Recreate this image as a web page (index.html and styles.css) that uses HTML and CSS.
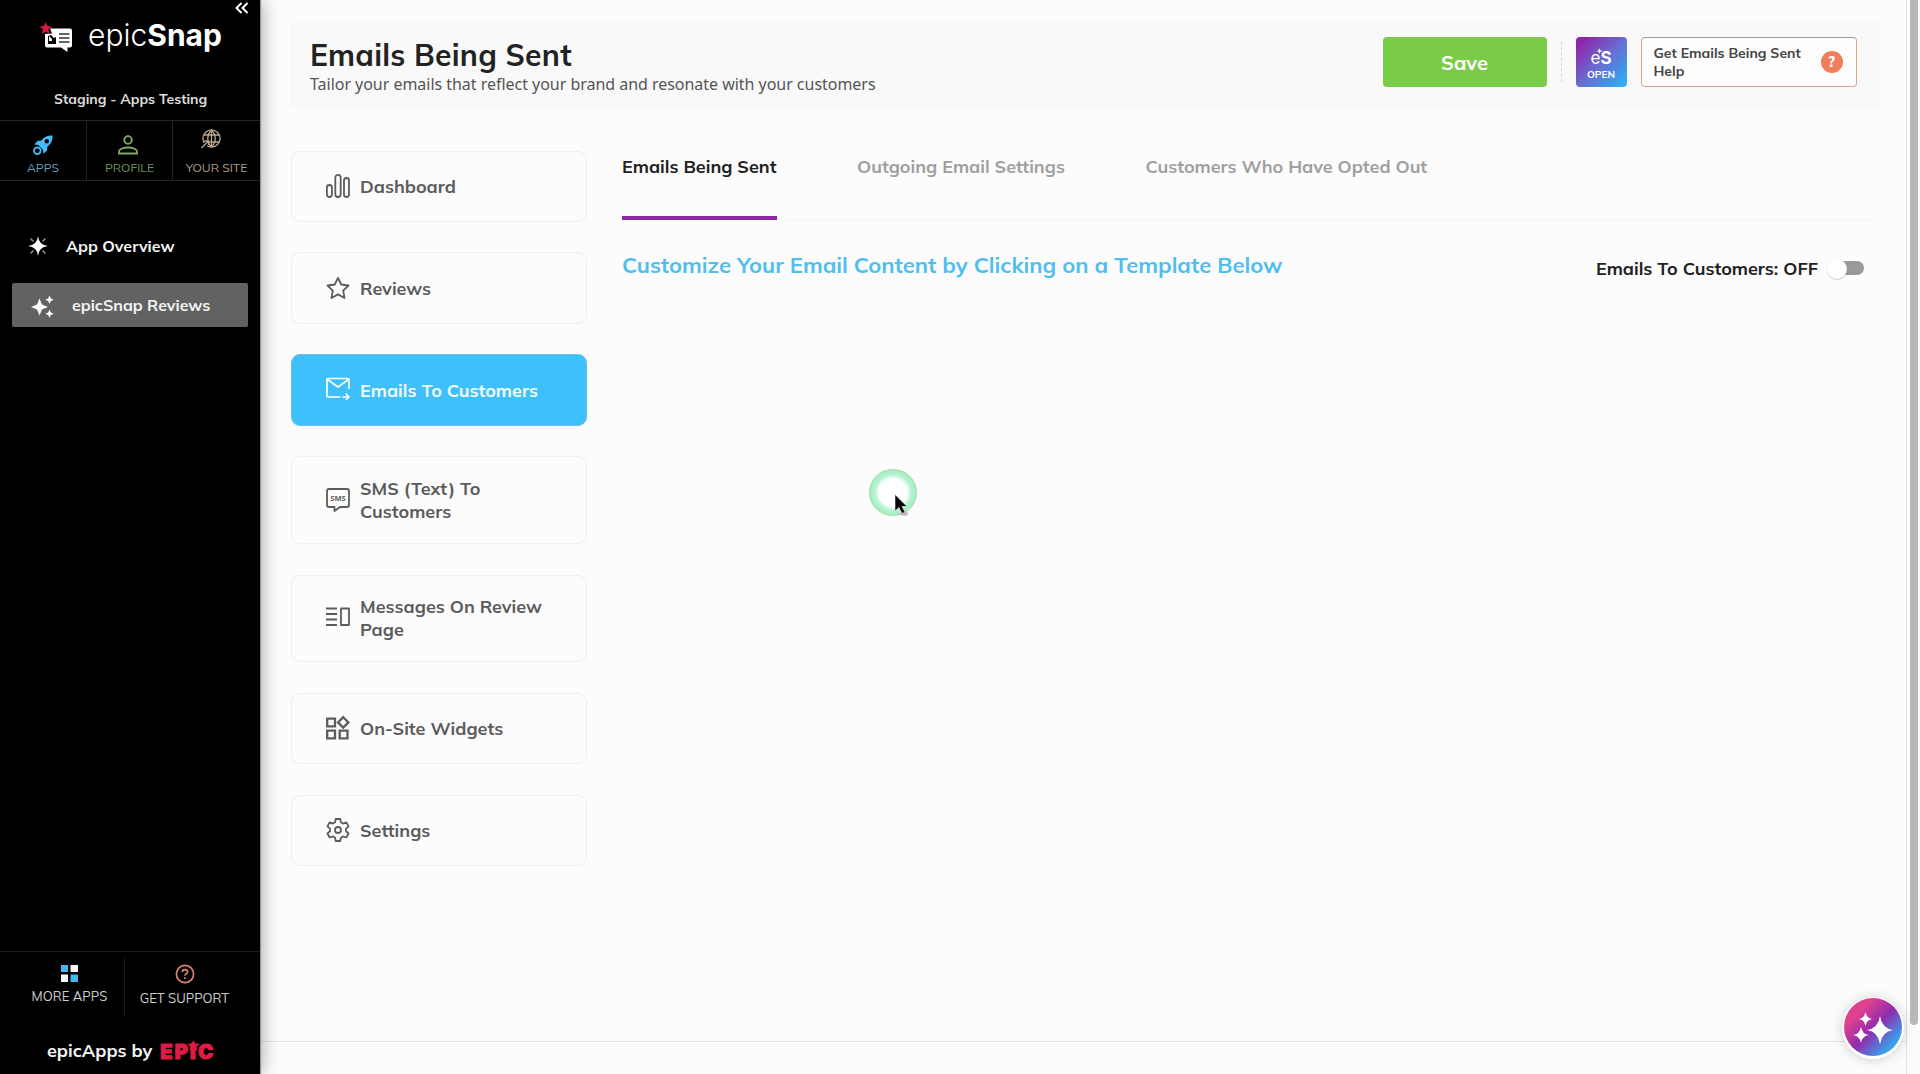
FILE: index.html
```html
<!DOCTYPE html>
<html lang="en">
<head>
    <meta charset="UTF-8">
    <meta name="viewport" content="width=device-width, initial-scale=1.0">
    <title>epicSnap - Emails Being Sent</title>
    <link rel="stylesheet" href="styles.css">
</head>
<body>
    <aside id="sidebar">
        <div id="collapse">
            <svg width="14" height="12" viewBox="0 0 14 12" fill="none" stroke="#fff" stroke-width="2"><path d="M6.5 1L1.5 6l5 5M12.5 1l-5 5 5 5"/></svg>
        </div>
        <div id="brand">
            <svg width="34" height="32" viewBox="0 0 34 32">
                <path fill="#fff" d="M7 6.500h23q2 0 2 2v15q0 2-2 2h-2.500V30L21 25.500H7q-2 0-2-2v-15q0-2 2-2z"/>
                <path fill="#000" d="M8 14l3-1 3 3 2-1v7H8z"/>
                <path fill="#fff" d="M9 14l3 3v2H9z"/>
                <path stroke="#333" stroke-width="1.4" d="M19 12h10.500M19 16h10.500M19 20h10.500"/>
                <path fill="#000" d="M5 6.500h5l2 5-7 .5z"/>
                <path fill="#d9183f" d="M5.700 0l1.700 4 4.300.400-3.300 2.900 1.100 4.400-3.800-2.300-3.900 2.300 1.100-4.400L-.5 4.400 3.900 4z"/>
            </svg>
            <div id="brandName">epic<b>Snap</b></div>
        </div>
        <div id="account">Staging - Apps Testing</div>
        <nav id="quickLinks">
            <a class="apps">
                <svg width="20" height="20" viewBox="0 0 20 20"><path fill="#41bdfb" d="M19.500.5c-5-.2-8.500 1.200-11 5L4.500 6 1.200 9.600l4 .5 4.700 4.700.6 4L14 15.400l.4-4c3.900-2.500 5.300-6 5.100-10.900z"/><circle cx="13.800" cy="6.200" r="2.200" fill="#000"/><circle cx="4.300" cy="15.800" r="3.300" fill="none" stroke="#41bdfb" stroke-width="1.800"/></svg>
                <span>APPS</span>
            </a>
            <a class="profile">
                <svg width="20" height="20" viewBox="0 0 20 20" fill="none" stroke="#7cae5e" stroke-width="1.800"><circle cx="10" cy="5" r="3.800"/><path d="M1 18.500v-2c0-2 4-4 9-4s9 2 9 4v2z"/></svg>
                <span>PROFILE</span>
            </a>
            <a class="site">
                <svg width="20" height="20" viewBox="0 0 20 20" fill="none" stroke="#bda48e" stroke-width="1.300"><circle cx="10.500" cy="9.500" r="8.600"/><path d="M3 6h15M3 13h15M10.500 1c-5 5-5 12 0 17M10.500 1c5 5 5 12 0 17M10.500 1v17"/><path stroke="#000" stroke-width="4" d="M1 19l6-6"/><path d="M.5 19l7-7M3.500 12H7.500V16"/></svg>
                <span>YOUR SITE</span>
            </a>
        </nav>
        <nav id="appList">
            <a class="overview">
                <svg width="20" height="20" viewBox="0 0 20 20"><path fill="#fff" d="M10 0Q10.800 9.200 20 10 10.800 10.800 10 20 9.200 10.800 0 10 9.200 9.200 10 0z"/><path fill="#fff" d="M10 4l2 4 4 2-4 2-2 4-2-4-4-2 4-2z"/><path stroke="#888" stroke-width="1.600" d="M2.500 2.500l3 3M17.500 2.500l-3 3M2.500 17.500l3-3M17.500 17.500l-3-3"/></svg>
                <span>App Overview</span>
            </a>
            <a class="active">
                <svg width="24" height="24" viewBox="0 0 24 24" fill="#fff"><path d="M8.500 5.500l2.500 6 6 2.500-6 2.500-2.500 6L6 16.500 0 14l6-2.500zM18.500 2.500l1.300 3 3 1.300-3 1.300-1.300 3-1.300-3-3-1.300 3-1.300zM18.500 16.500l1.300 3 3 1.300-3 1.300-1.300 3-1.300-3-3-1.300 3-1.300z"/></svg>
                <span>epicSnap Reviews</span>
            </a>
        </nav>
        <div id="sidebarFooter">
            <a class="more">
                <svg width="17" height="17" viewBox="0 0 17 17"><path fill="#fff" d="M9.500 0H17v7H9.500zM0 9.500h7V17H0z"/><path fill="#41b9f5" d="M0 0h7v7H0zM9.500 9.500H17V17H9.500z"/></svg>
                <span>MORE APPS</span>
            </a>
            <a class="support">
                <svg width="20" height="20" viewBox="0 0 20 20" fill="none" stroke="#dd8377"><circle cx="10" cy="10" r="8.600" stroke-width="1.700"/><path stroke-width="1.700" d="M7.300 8.200C7.300 4.700 12.800 4.900 12.600 8c-.1 1.700-2.600 1.700-2.600 3.800M10 13.200v1.800"/></svg>
                <span>GET SUPPORT</span>
            </a>
        </div>
        <div id="credit">
            <span>epicApps by</span>
            <span id="epicLogo">EP<i>I<svg width="13" height="11" viewBox="0 0 13 11"><path fill="#df1a45" d="M6.500 0l1.600 3.400 4.900.4-3.500 2.700 1 4.300-4-2.200-4 2.200 1-4.300L0 3.800l4.900-.4z"/></svg></i>C</span>
        </div>
    </aside>

    <main id="page">
        <header id="pageHeader">
            <div id="titles">
                <h1>Emails Being Sent</h1>
                <p>Tailor your emails that reflect your brand and resonate with your customers</p>
            </div>
            <button id="saveButton">Save</button>
            <div id="divider"></div>
            <div id="openApp">
                <div class="mark">e<b>S</b><svg width="7" height="6" viewBox="0 0 10 10"><path fill="#fff" d="M5 0l1.300 3.700L10 5 6.300 6.300 5 10 3.700 6.300 0 5l3.700-1.300z"/></svg></div>
                <div class="open">OPEN</div>
            </div>
            <div id="helpBox">
                <span>Get Emails Being Sent<br>Help</span>
                <div class="question">?</div>
            </div>
        </header>

        <div id="columns">
            <nav id="menu">
                <a class="item">
                    <svg class="icon" viewBox="0 0 24 24"><rect x=".9" y="11" width="5" height="12" rx="2.500"/><rect x="9.300" y=".9" width="5.400" height="22.100" rx="2.700"/><rect x="18" y="4" width="5" height="19" rx="2.500"/></svg>
                    <span>Dashboard</span>
                </a>
                <a class="item">
                    <svg class="icon" viewBox="0 0 24 24"><path d="M12 1.800l3.200 6.700 7.300 1-5.300 5.100 1.300 7.400-6.500-3.600L5.500 22l1.300-7.400L1.500 9.500l7.300-1z"/></svg>
                    <span>Reviews</span>
                </a>
                <a class="item active">
                    <svg class="icon mail" viewBox="0 0 24 24"><path d="M14.500 20H2.300Q1 20 1 18.700V2.800Q1 1.500 2.300 1.500h19.400q1.300 0 1.300 1.300V12M1.500 2.500L12 10l10.500-7.500M16.500 20H23M19.800 16.500L23 20l-3.200 3"/></svg>
                    <span>Emails To Customers</span>
                </a>
                <a class="item tall">
                    <svg class="icon" viewBox="0 0 24 24"><path d="M3 1h18q2 0 2 2v14q0 2-2 2h-7l-5.500 4v-4H3q-2 0-2-2V3q0-2 2-2z"/><text x="12" y="12.800" text-anchor="middle">SMS</text></svg>
                    <span>SMS (Text) To<br>Customers</span>
                </a>
                <a class="item tall">
                    <svg class="icon" viewBox="0 0 24 24"><path d="M0 2.500h11M0 8h11M0 13.500h11M0 19h11M15 2.500h8V19h-8z"/></svg>
                    <span>Messages On Review<br>Page</span>
                </a>
                <a class="item">
                    <svg class="icon bold" viewBox="0 0 24 24"><path d="M1.200 2.700h7.800v7.600H1.200zM1.200 14.700h7.800v7.600H1.200zM13.700 14.700h7.800v7.600h-7.800zM17.200 1.200l5.200 5.200-5.200 5.200L12 6.400z"/></svg>
                    <span>On-Site Widgets</span>
                </a>
                <a class="item">
                    <svg class="icon" viewBox="0 0 24 24"><circle cx="12" cy="12" r="3"/><path d="M9.700 1h4.600l.6 3.300 2.200 1.300 3.200-1.200 2.300 4-2.600 2.200v2.700l2.600 2.200-2.300 4-3.200-1.100-2.200 1.300-.6 3.300H9.700l-.6-3.300-2.200-1.300-3.200 1.100-2.300-4L4 13.300v-2.700L1.400 8.400l2.300-4 3.200 1.200 2.200-1.300z"/></svg>
                    <span>Settings</span>
                </a>
            </nav>

            <section id="content">
                <div id="tabs">
                    <a class="tab selected">Emails Being Sent</a>
                    <a class="tab">Outgoing Email Settings</a>
                    <a class="tab">Customers Who Have Opted Out</a>
                </div>
                <div id="contentHead">
                    <h2>Customize Your Email Content by Clicking on a Template Below</h2>
                    <div id="toggleRow">
                        <span>Emails To Customers: OFF</span>
                        <div id="toggle"></div>
                    </div>
                </div>
            </section>
        </div>
        <div id="bottomLine"></div>
    </main>

    <div id="scrollbar"><div id="thumb"></div></div>

    <!-- floating assistant button -->
    <div id="assistant">
        <svg width="58" height="58" viewBox="0 0 58 58" fill="#fff"><path d="M36 18q2 12.500 13 14-11 1.500-13 14-2-12.500-13-14 11-1.500 13-14zM21.500 14q1.200 6.300 6.500 7-5.300.7-6.500 7-1.200-6.300-6.500-7 5.300-.7 6.500-7zM17 29q1.300 7.200 8 8-6.700.8-8 8-1.300-7.200-8-8 6.700-.8 8-8z"/></svg>
    </div>

    <!-- mouse pointer with click halo -->
    <div id="pointer">
        <svg width="16" height="26" viewBox="0 0 16 26"><path fill="#b9b9b9" d="M3 20l10-3 1 4-3 1z"/><path fill="#000" stroke="#eee" stroke-width=".6" d="M1 .5v16.500l4-3.500 3 6 3-1.400-3-5.600h5z"/></svg>
    </div>
</body>
</html>
```

FILE: styles.css
```css
* {
    box-sizing: border-box;
}

body {
    margin: 0;
    height: 1074px;
    display: flex;
    overflow: hidden;
    background-color: #fcfcfc;
    font-family: Mulish, "Open Sans", "Noto Sans", sans-serif;
    font-weight: 700;
    color: #222;
}

svg {
    display: block;
    flex: none;
    overflow: visible;
}

span, h1, h2, p, a {
    white-space: nowrap;
}

/* Sidebar */
#sidebar {
    width: 260px;
    height: 1074px;
    flex: none;
    background-color: #000;
    color: #ddd;
    display: flex;
    flex-direction: column;
    box-shadow: 1px 0 1px #999, 3px 0 16px rgba(0, 0, 0, 0.3);
    z-index: 1;
}

#collapse {
    height: 22px;
    padding: 2px 11px 0 0;
    display: flex;
    justify-content: flex-end;
}

#brand {
    height: 50px;
    padding-left: 40px;
    display: flex;
    gap: 14px;
}

#brandName {
    font-family: Inter, sans-serif;
    font-weight: 300;
    font-size: 30px;
    line-height: 27px;
    color: #fff;
}

#brandName b {
    font-weight: 700;
}

#account {
    height: 48px;
    padding-left: 54px;
    padding-top: 16px;
    font-size: 14px;
    line-height: 22px;
}

#quickLinks {
    height: 61px;
    display: flex;
    border-top: 1px solid #222;
    border-bottom: 1px solid #222;
    font-weight: 400;
    font-size: 12.1px;
}

#quickLinks a {
    width: 86px;
    padding-top: 14px;
    display: flex;
    flex-direction: column;
    align-items: center;
    gap: 4px;
    border-right: 1px solid #222;
    line-height: 18px;
}

#quickLinks .apps {
    width: 87px;
    color: #6a9fbc;
}

#quickLinks .profile {
    color: #69935a;
}

#quickLinks .profile svg {
    margin-right: 3px;
}

#quickLinks .site {
    width: 87px;
    padding-top: 8px;
    gap: 10px;
    border-right: none;
    color: #ac9c8a;
}

#quickLinks .site svg {
    margin-right: 12px;
}

#appList {
    padding: 43px 12px 0;
    font-size: 16px;
}

#appList a {
    height: 44px;
    display: flex;
    align-items: center;
    color: #f3f3f3;
}

#appList .overview {
    padding-left: 16px;
    gap: 18px;
    margin-bottom: 15px;
}

#appList .active {
    padding-left: 19px;
    gap: 17px;
    background-color: #626262;
    border-radius: 2px;
}

#sidebarFooter {
    height: 72px;
    margin-top: auto;
    padding-top: 5px;
    display: flex;
    border-top: 1px solid #1d1d1d;
    font-weight: 400;
    font-size: 13px;
    line-height: 18px;
    color: #ccc;
}

#sidebarFooter a {
    height: 60px;
    display: flex;
    flex-direction: column;
    align-items: center;
}

#sidebarFooter .more {
    width: 125px;
    padding: 8px 0 0 15px;
    gap: 5px;
    border-right: 1px solid #1d1d1d;
}

#sidebarFooter .support {
    width: 119px;
    padding-top: 7px;
    gap: 5px;
}

#credit {
    height: 51px;
    padding: 16px 0 0 47px;
    display: flex;
    gap: 8px;
    font-size: 18px;
    line-height: 24px;
    color: #f3f3f3;
}

#epicLogo {
    padding-top: 1px;
    font-family: Inter, sans-serif;
    font-weight: 900;
    font-size: 20px;
    letter-spacing: 2.2px;
    color: #df1a45;
    -webkit-text-stroke: 1.2px #df1a45;
}

#epicLogo i {
    position: relative;
    font-style: normal;
}

#epicLogo svg {
    position: absolute;
    left: -3px;
    top: 0;
}

/* Page */
#page {
    width: 1646.5px;
    height: 1074px;
    padding-top: 22px;
    display: flex;
    flex-direction: column;
    border-right: 1px solid #e3e3e3;
}

#pageHeader {
    height: 87px;
    margin: 0 25px 0 30px;
    padding: 15px 24px 0 20px;
    display: flex;
    background-color: #f9f9f9;
}

#titles {
    flex: 1;
}

h1 {
    margin: 0;
    font-size: 30px;
    line-height: 36px;
    font-weight: 700;
    letter-spacing: 0.25px;
}

#titles p {
    margin: 0;
    font-family: "Noto Sans", sans-serif;
    font-weight: 400;
    font-size: 16px;
    line-height: 22px;
    letter-spacing: -0.03px;
    color: #555;
}

#saveButton {
    width: 164px;
    height: 50px;
    padding: 0;
    border: none;
    border-radius: 4px;
    background-color: #7acc48;
    color: #fff;
    font: 700 20px Mulish, "Open Sans", sans-serif;
}

#divider {
    height: 40px;
    margin: 5px 14px 0;
    border-left: 1px dashed #d5d5d5;
}

#openApp {
    width: 51px;
    height: 50px;
    border-radius: 4px;
    background: linear-gradient(135deg, #8e24aa 10%, #6a6cd0 50%, #3d98e8 80%, #2eb8f5);
    color: #fff;
    text-align: center;
}

#openApp .mark {
    position: relative;
    padding-top: 12px;
    font-family: Inter, sans-serif;
    font-weight: 400;
    font-size: 17px;
    line-height: 19px;
}

#openApp .mark svg {
    position: absolute;
    left: 20px;
    top: 11px;
}

#openApp .open {
    font-size: 10px;
    line-height: 13px;
}

#helpBox {
    width: 216px;
    height: 50px;
    margin-left: 14px;
    padding: 0 13px 0 12px;
    display: flex;
    justify-content: space-between;
    align-items: center;
    border: 1px solid #dba894;
    border-top-color: #999;
    border-radius: 4px;
    background-color: #fdfdfd;
    font-size: 14px;
    line-height: 18px;
    color: #444;
}

#helpBox .question {
    width: 22px;
    height: 22px;
    border-radius: 50%;
    background-color: #f27d5b;
    color: #fff;
    font-size: 15px;
    font-weight: 800;
    line-height: 22px;
    text-align: center;
}

#columns {
    height: 932px;
    margin-top: 41.5px;
    padding-left: 30.5px;
    display: flex;
}

#menu {
    width: 296.5px;
    display: flex;
    flex-direction: column;
    gap: 30.4px;
    font-size: 18px;
    line-height: 23.3px;
    color: #5c5c5c;
}

#menu .item {
    height: 71.6px;
    padding-left: 34.5px;
    display: flex;
    align-items: center;
    gap: 10px;
    border: 1px solid #eee;
    border-radius: 9px;
}

#menu .tall {
    height: 87.7px;
}

#menu .active {
    background-color: #3dc0fc;
    border-color: #6fbfe4;
    color: #f4fbff;
}

.icon {
    width: 24px;
    height: 24px;
    fill: none;
    stroke: #5c5c5c;
    stroke-width: 1.8;
    stroke-linejoin: round;
}

.icon.bold {
    stroke-width: 2.3;
    stroke-linejoin: miter;
}

.icon.mail {
    stroke: #fff;
    stroke-width: 1.7;
    margin-top: -2px;
}

.icon text {
    font-family: "Open Sans", sans-serif;
    font-size: 7.5px;
    font-weight: 700;
    fill: #5c5c5c;
    stroke: none;
}

#content {
    width: 1256px;
    margin-left: 35px;
}

#tabs {
    height: 69px;
    display: flex;
    gap: 80.5px;
    border-bottom: 1px solid #f5f5f5;
    font-size: 18px;
    line-height: 32px;
    color: #a0a0a0;
}

.tab {
    height: 69px;
}

.tab.selected {
    color: #222;
    border-bottom: 4px solid #8d27a3;
}

#contentHead {
    margin-top: 31px;
    padding-right: 14px;
    display: flex;
    justify-content: space-between;
}

h2 {
    margin: -1px 0 0;
    font-size: 22px;
    line-height: 30px;
    font-weight: 700;
    color: #4fbfec;
}

#toggleRow {
    display: flex;
    align-items: center;
    gap: 11px;
    font-size: 18px;
    height: 35px;
}

#toggle {
    position: relative;
    width: 35px;
    height: 14px;
    border-radius: 7px;
    background-color: #999;
}

#toggle::before {
    content: "";
    position: absolute;
    left: -2px;
    top: -2px;
    width: 20px;
    height: 20px;
    border-radius: 50%;
    background-color: #fff;
    box-shadow: 0 1px 1px rgba(0, 0, 0, 0.2);
}

#bottomLine {
    height: 1px;
    margin-top: -41.5px;
    background-color: #e2e2e2;
}

#scrollbar {
    width: 13px;
    padding-left: 3px;
}

#thumb {
    width: 8px;
    height: 1025px;
    border-radius: 0 0 4px 4px;
    background-color: #b8b8b8;
}

#assistant {
    position: absolute;
    left: 1844px;
    top: 998px;
    width: 58px;
    height: 58px;
    border-radius: 50%;
    background: linear-gradient(135deg, #e0418f 25%, #8f2cae 52%, #3e9bea 80%, #2fb5f5);
    box-shadow: 0 1px 0 2px #fff, 0 2px 14px rgba(0, 0, 0, 0.25);
    z-index: 2;
}

#pointer {
    position: absolute;
    left: 869px;
    top: 469px;
    width: 48px;
    height: 47px;
    border-radius: 50%;
    border: 1px solid #a2e0a8;
    background: radial-gradient(closest-side, #fff 60%, #b5f2d3 80%, #a6ecc4);
    padding: 24px 0 0 24px;
}
```
